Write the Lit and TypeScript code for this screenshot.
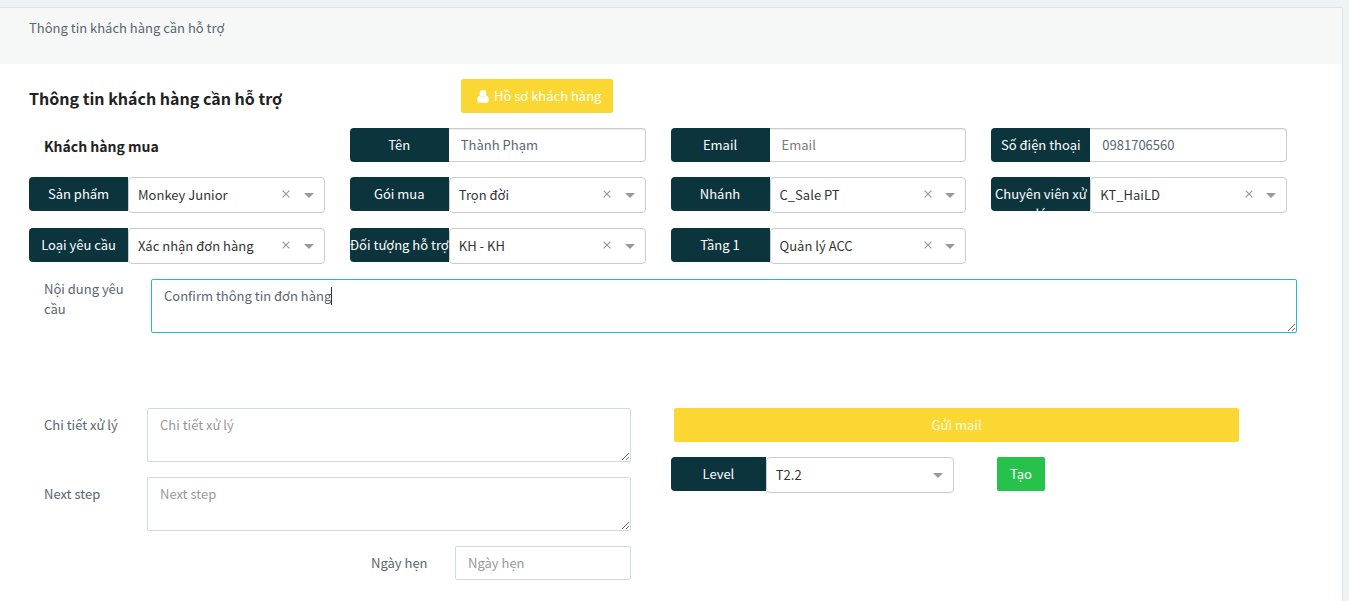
import { LitElement, html, css, nothing } from "lit";
import { customElement, property } from "lit/decorators.js";

const controls = css`
  * {
    box-sizing: border-box;
  }
  input,
  select,
  textarea,
  button {
    font: inherit;
    margin: 0;
    outline: none;
  }
  .tag {
    flex: none;
    width: 33.5%;
    height: 34px;
    padding-top: 7px;
    overflow: hidden;
    border-radius: 4px 0 0 4px;
    background: #0c343d;
    color: #fff;
    text-align: center;
  }
`;

@customElement("text-field")
class TextField extends LitElement {
  @property() label = "";
  @property() value = "";
  @property() placeholder = "";

  static styles = [
    controls,
    css`
      :host {
        display: flex;
        min-width: 0;
      }
      .box {
        flex: 1;
        min-width: 0;
        height: 34px;
        padding: 0 12px 2px;
        border: 1px solid #ccc;
        border-left-width: 0;
        border-radius: 0 4px 4px 0;
        background: #fff;
        box-shadow: inset 0 1px 1px rgba(0, 0, 0, 0.075);
        color: #58666e;
      }
      .box::placeholder {
        color: #7b7b7b;
      }
    `,
  ];

  render() {
    return html`
      <label class="tag" for="box">${this.label}</label>
      <input class="box" id="box" type="text" .value=${this.value} placeholder=${this.placeholder} />
    `;
  }
}

@customElement("select-field")
class SelectField extends LitElement {
  @property() label = "";
  @property() value = "";
  @property({ type: Boolean }) clearable = false;

  static styles = [
    controls,
    css`
      :host {
        display: flex;
        min-width: 0;
      }
      .control {
        position: relative;
        flex: 1;
        min-width: 0;
      }
      .box {
        display: block;
        width: 100%;
        height: 36px;
        padding: 0 60px 0 9px;
        appearance: none;
        border: 1px solid #ccc;
        border-radius: 4px;
        background: #fff;
        color: #333;
      }
      .clear {
        position: absolute;
        top: 8px;
        right: 30px;
        display: flex;
        align-items: center;
        justify-content: center;
        width: 17px;
        height: 18px;
        padding: 0;
        border: 0;
        background: none;
      }
      .arrow {
        position: absolute;
        top: 16px;
        right: 11px;
        border: 5px solid transparent;
        border-top-color: #999;
        border-bottom-width: 0;
        pointer-events: none;
      }
    `,
  ];

  render() {
    return html`
      <label class="tag" for="box">${this.label}</label>
      <div class="control">
        <select class="box" id="box">
          <option>${this.value}</option>
        </select>
        ${this.clearable
          ? html`<button class="clear" type="button" aria-label="Clear">
              <svg width="8" height="8" viewBox="0 0 8 8" stroke="#999" stroke-width="1.2">
                <path d="M.6 .6 7.4 7.4M7.4 .6 .6 7.4" />
              </svg>
            </button>`
          : nothing}
        <span class="arrow"></span>
      </div>
    `;
  }
}

@customElement("app-root")
class AppRoot extends LitElement {
  static styles = [
    controls,
    css`
      :host {
        display: flex;
        flex-direction: column;
        min-height: 100vh;
        box-sizing: border-box;
        padding: 7px 6px 0 0;
        background: #f0f3f4;
        color: #58666e;
        font: 13px/20px "Noto Sans CJK SC", "Noto Sans", sans-serif;
      }
      .panel {
        flex: 1;
        border: solid #dee5e7;
        border-width: 1px 1px 0 0;
        background: #fff;
      }
      .crumb {
        height: 56px;
        padding: 10px 29px;
        background: #f6f8f8;
      }
      .content {
        padding: 15px 45px 20px 29px;
      }
      .grid {
        display: grid;
        grid-template-columns: repeat(4, minmax(0, 1fr));
        gap: 15px 25px;
        margin: 15px 10px 15px 0;
      }
      .top {
        display: grid;
        grid-template-columns: 432px auto;
        justify-content: start;
      }
      h1,
      h2 {
        margin: 0;
        color: #222;
        font-weight: 700;
      }
      h1 {
        padding-top: 7px;
        font-size: 16px;
        line-height: 24px;
      }
      h2 {
        padding: 8px 15px 0;
        font-size: 14px;
      }
      .btn {
        display: flex;
        align-items: center;
        justify-content: center;
        height: 34px;
        padding: 0 12px;
        border: 0;
        border-radius: 2px;
        background: #fad733;
        color: #fff;
      }
      .icon {
        margin: 0 5px 0 4px;
      }
      .create {
        padding: 0 13px;
        background: #27c24c;
      }
      .mail {
        margin: 0 58px 0 3px;
        color: #fffbe0;
      }
      .note {
        display: grid;
        grid-template-columns: 122px minmax(0, 1fr);
      }
      .note .name {
        padding: 0 25px 0 15px;
      }
      .area {
        position: relative;
      }
      .box {
        display: block;
        width: 100%;
        height: 34px;
        padding: 5px 12px 7px;
        border: 1px solid #cfdadd;
        border-radius: 2px;
        background: #fff;
        color: #58666e;
      }
      .box::placeholder {
        color: #999;
      }
      textarea.box {
        height: 54px;
        padding: 6px 12px;
      }
      .focused {
        border-color: #23b7e5;
      }
      .caret {
        position: absolute;
        top: 8px;
        left: 180px;
        width: 1px;
        height: 18px;
        background: #333;
      }
      .lower {
        display: grid;
        grid-template-columns: minmax(0, 602fr) minmax(0, 626fr);
        gap: 40px;
        margin-top: 75px;
      }
      .left {
        display: grid;
        grid-template-columns: 118px minmax(0, 1fr);
        gap: 15px 0;
      }
      .left .name {
        padding: 7px 0 0 15px;
      }
      .date {
        grid-column: 1 / -1;
        display: grid;
        grid-template-columns: 84px 176px;
        justify-content: end;
      }
      .left .date .name {
        padding-left: 0;
      }
      .right {
        display: flex;
        flex-direction: column;
        gap: 15px;
      }
      .level {
        display: grid;
        grid-template-columns: 283px auto;
        justify-content: start;
        align-items: start;
        gap: 43px;
      }
    `,
  ];

  render() {
    return html`
      <main class="panel">
        <header class="crumb">Thông tin khách hàng cần hỗ trợ</header>
        <div class="content">
          <div class="top">
            <h1>Thông tin khách hàng cần hỗ trợ</h1>
            <button class="btn" type="button">
              <svg class="icon" width="12" height="13" viewBox="0 0 12 13" fill="#fff">
                <circle cx="6" cy="3.4" r="3.4" />
                <path d="M2.700 5.500C.9 5.800 .2 8 .2 10.300 .2 11.800 1.200 12.800 2.700 12.800H9.300C10.800 12.800 11.800 11.800 11.800 10.300 11.800 8 11.100 5.800 9.300 5.500 8.500 6.700 7.300 7.300 6 7.300S3.500 6.700 2.700 5.500Z" />
              </svg>
              Hồ sơ khách hàng
            </button>
          </div>
          <div class="grid">
            <h2>Khách hàng mua</h2>
            <text-field label="Tên" value="Thành Phạm"></text-field>
            <text-field label="Email" placeholder="Email"></text-field>
            <text-field label="Số điện thoại" value="0981706560"></text-field>
            <select-field clearable label="Sản phẩm" value="Monkey Junior"></select-field>
            <select-field clearable label="Gói mua" value="Trọn đời"></select-field>
            <select-field clearable label="Nhánh" value="C_Sale PT"></select-field>
            <select-field clearable label="Chuyên viên xử lý" value="KT_HaiLD"></select-field>
            <select-field clearable label="Loại yêu cầu" value="Xác nhận đơn hàng"></select-field>
            <select-field clearable label="Đối tượng hỗ trợ" value="KH - KH"></select-field>
            <select-field clearable label="Tầng 1" value="Quản lý ACC"></select-field>
          </div>
          <div class="note">
            <label class="name" for="request">Nội dung yêu cầu</label>
            <div class="area">
              <textarea class="box focused" id="request" .value=${"Confirm thông tin đơn hàng"}></textarea>
              <span class="caret"></span>
            </div>
          </div>
          <div class="lower">
            <div class="left">
              <label class="name" for="detail">Chi tiết xử lý</label>
              <textarea class="box" id="detail" placeholder="Chi tiết xử lý"></textarea>
              <label class="name" for="next">Next step</label>
              <textarea class="box" id="next" placeholder="Next step"></textarea>
              <div class="date">
                <label class="name" for="date">Ngày hẹn</label>
                <input class="box" id="date" type="text" placeholder="Ngày hẹn" />
              </div>
            </div>
            <div class="right">
              <button class="btn mail" type="button">Gửi mail</button>
              <div class="level">
                <select-field label="Level" value="T2.2"></select-field>
                <button class="btn create" type="button">Tạo</button>
              </div>
            </div>
          </div>
        </div>
      </main>
    `;
  }
}
